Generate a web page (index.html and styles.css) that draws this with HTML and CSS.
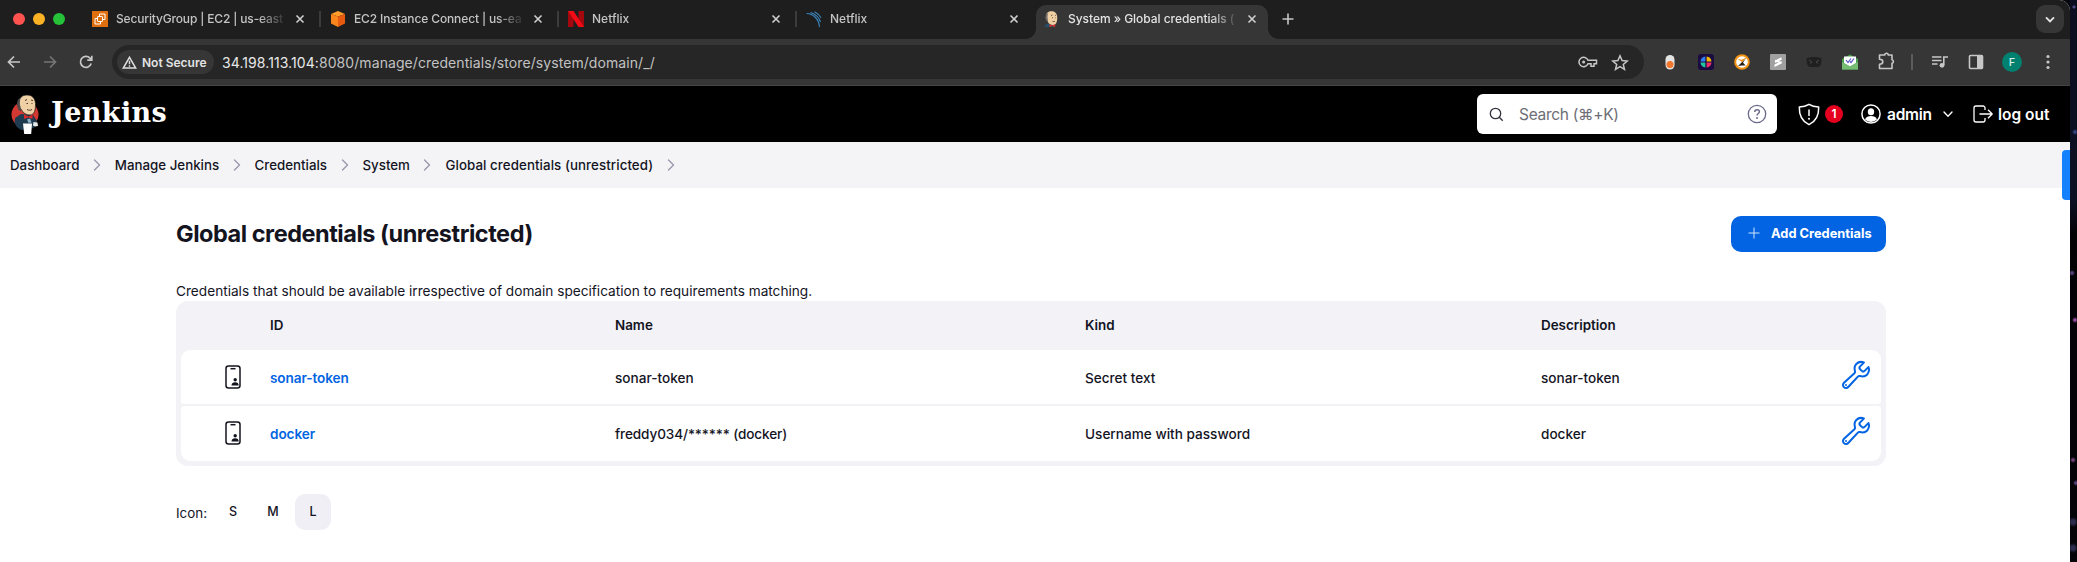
FILE: index.html
```html
<!DOCTYPE html>
<html lang="en">
<head>
<meta charset="utf-8">
<title>System » Global credentials (unrestricted) [Jenkins]</title>
<link rel="stylesheet" href="styles.css">
</head>
<body>
<svg width="0" height="0" class="defs">
  <symbol id="close" viewBox="0 0 10 10"><path d="M1.5 1.5l7 7M8.5 1.5l-7 7" fill="none" stroke="currentColor" stroke-width="1.6"/></symbol>
  <symbol id="chev" viewBox="0 0 8 12"><path d="M1.5 1l5 5-5 5" fill="none" stroke="#9a99ae" stroke-width="1.4" stroke-linecap="round" stroke-linejoin="round"/></symbol>
  <symbol id="cred" viewBox="0 0 16 24"><rect x="1" y="1" width="14" height="22" rx="2.5" fill="none" stroke="#14141f" stroke-width="1.5"/><path d="M5.5 3.7h5" stroke="#14141f" stroke-width="1.5"/><circle cx="10.2" cy="14.8" r="1.7" fill="#14141f"/><path d="M6.5 20.6c0-2.300 1.600-3.300 3.700-3.300s3.500 1 3.500 3.300z" fill="#14141f"/></symbol>
  <symbol id="wrench" viewBox="0 0 512 512"><path d="M393.870 190a32.100 32.100 0 01-45.250 0l-26.570-26.570a32.090 32.090 0 010-45.260L382.190 58a1 1 0 00-.3-1.640c-38.820-16.640-89.150-8.160-121.110 23.570-30.580 30.350-32.320 76-21.120 115.840a31.930 31.930 0 01-9.060 32.080L64 380a48.170 48.170 0 1068 68l153.860-167a31.930 31.930 0 0131.600-9.130c39.540 10.590 84.540 8.600 114.720-21.190 32.490-32 39.500-88.560 23.750-120.930a1 1 0 00-1.600-.26z" fill="none" stroke="currentColor" stroke-width="32" stroke-linecap="round"/><circle cx="96" cy="416" r="16" fill="currentColor"/></symbol>
  <symbol id="butler" viewBox="0 0 30 40">
    <ellipse cx="14" cy="20.500" rx="13.500" ry="13" fill="#d33833"/>
    <path d="M4 24l6-4 12 1 4 6-2 6-4 2-10 1-4-3c-2-2-3-5-2-8z" fill="#1f3b50"/>
    <path d="M8 9c0-5 3-8 8-8s8 3 8.500 8.500c.2 6-1 11.500-5.500 11.500-4 0-7-2-9-6-2-1-3-3-2-6z" fill="#efcfa4" stroke="#1b1b1b" stroke-width=".7"/>
    <path d="M7.500 5c-2 3-2 7 0 11l2.500 1.500-.5-5C8.500 11 8.500 8 9.500 4z" fill="#4f4b4a"/>
    <path d="M14 6.500l2-1M20 6l2 .5M15.500 9.500h1.500M20.500 9.500h1M16 15.500c2 1 3.500 1 5 0" fill="none" stroke="#3b2a20" stroke-width=".9"/>
    <path d="M13 20.500l4.500 2 4-2v4.500l-4-1.500-4.500 1.500z" fill="#d9292a"/>
    <path d="M16 25.500l3-1 1.500 4-3 .5z" fill="#8fb2c8"/>
    <path d="M12 29.500h9l-.8 10.500h-7z" fill="#fff"/><path d="M22.500 28l4 .5.500 3.500-3 .500-2-1z" fill="#e8e8e8"/>
  </symbol>
</svg>
<div class="screen">
  <div class="window">
    <div class="tabs">
      <div class="lights"><i class="red"></i><i class="yellow"></i><i class="green"></i></div>
      <div class="tab">
        <svg class="fav" viewBox="0 0 16 16"><rect width="16" height="16" fill="#e0700f"/><g fill="none" stroke="#fff" stroke-width="1"><rect x="5.500" y="5.500" width="5" height="5" rx=".6"/><path d="M7.500 5.500v-2.500h5.500v5.500h-2.500M5.500 7.500H3v5.500h5.500v-2.500"/></g></svg>
        <span class="title t1">SecurityGroup | EC2 | us-east</span><svg class="x"><use href="#close"/></svg>
      </div>
      <div class="tab sep">
        <svg class="fav" viewBox="0 0 16 16"><path d="M8 0l7 3-7 2.500L1 3z" fill="#ff9c2a"/><path d="M1 3l7 2.500V16l-7-3.500z" fill="#f9861d"/><path d="M15 3L8 5.500V16l7-3.500z" fill="#e85a10"/></svg>
        <span class="title t2">EC2 Instance Connect | us-ea</span><svg class="x"><use href="#close"/></svg>
      </div>
      <div class="tab sep">
        <svg class="fav" viewBox="0 0 16 16"><path d="M0 0h5.500v16H0zM10.500 0H16v16h-5.500z" fill="#a5070f"/><path d="M0 0h5.500L16 16h-5.500z" fill="#f20c16"/></svg>
        <span class="title">Netflix</span><svg class="x"><use href="#close"/></svg>
      </div>
      <div class="tab sep">
        <svg class="fav" viewBox="0 0 16 16" fill="none" stroke="#3b86bd" stroke-width="1.100"><path d="M.5 2.500C7 2.500 13 8 13.500 16M4.500 1.500C9 3 13 6.500 14.500 11M8.500.7c3 1.500 5 3.300 6.500 6"/></svg>
        <span class="title">Netflix</span><svg class="x"><use href="#close"/></svg>
      </div>
      <div class="tab active">
        <svg class="fav" viewBox="0 0 16 16"><path d="M.5 16c.3-2 1.500-3 4-3.500l5 .5 2 3z" fill="#25506a"/><path d="M2 5.500C2 2 4.500.3 7.500.3S13 2 13.200 6c.2 4.500-1 8-4 8S4.500 12.500 3.200 9.500C2 9 1.500 7.500 2 5.500z" fill="#efcfa4"/><path d="M3 2.500c-2 2-2 5-.3 7.500l1.300.5-.3-3c-.5-1.200-.3-3.500.6-5z" fill="#6f6a68"/><path d="M7 4.500l1.500-.5M11 4.200l1 .3M8 6.800h1M11 6.800h.7M8.500 10.500h2.500" stroke="#5b4636" stroke-width=".8"/><path d="M5.500 13.300l3 1.200 2.800-1.200V16l-2.800-.8-3 .8z" fill="#d9292a"/></svg>
        <span class="title t5">System » Global credentials (</span><svg class="x"><use href="#close"/></svg>
      </div>
      <svg class="plus" viewBox="0 0 12 12"><path d="M6 .5v11M.5 6h11" stroke="#c7c7c7" stroke-width="1.600"/></svg>
      <div class="drop"><svg width="10" height="7" viewBox="0 0 10 7"><path d="M1 1.300l4 4 4-4" fill="none" stroke="#e3e3e3" stroke-width="1.900"/></svg></div>
    </div>

    <div class="toolbar">
      <div class="nav">
        <svg width="14" height="14" viewBox="0 0 14 14"><path d="M13 7H2M7 1.500L1.500 7 7 12.500" fill="none" stroke="#c7c7c7" stroke-width="1.700"/></svg>
        <svg width="14" height="14" viewBox="0 0 14 14"><path d="M1 7h11M7 1.500L12.500 7 7 12.500" fill="none" stroke="#757575" stroke-width="1.700"/></svg>
        <svg width="14" height="14" viewBox="0 0 14 14"><path d="M12.200 8.500A5.500 5.500 0 1 1 11 3.100l1.500 1.600M12.800.7v4.500H8.300" fill="none" stroke="#c7c7c7" stroke-width="1.700"/></svg>
      </div>
      <div class="omni">
        <div class="chip"><svg width="15" height="13" viewBox="0 0 15 13"><path d="M7.500 1.300L13.700 12H1.300z" fill="none" stroke="#dedede" stroke-width="1.500"/><path d="M7.500 4.800v3.400M7.500 9.200v1.500" stroke="#dedede" stroke-width="1.400"/></svg><span>Not Secure</span></div>
        <span class="url"><b>34.198.113.104:</b>8080/manage/credentials/store/system/domain/_/</span>
        <svg class="key" width="20" height="12" viewBox="0 0 20 12"><path d="M10 4.200A4.700 4.700 0 1 0 10 7.800h3v2.500h3V7.800h2.500V4.200z" fill="none" stroke="#c7c7c7" stroke-width="1.500"/><circle cx="5.600" cy="6" r="1.500" fill="#c7c7c7"/></svg>
        <svg width="18" height="17" viewBox="0 0 18 17"><path d="M9 1.800l2.100 4.700 5.100.5-3.900 3.400 1.200 5L9 12.700l-4.500 2.700 1.200-5L1.800 7l5.100-.5z" fill="none" stroke="#c7c7c7" stroke-width="1.500"/></svg>
      </div>
      <div class="exts">
        <svg viewBox="0 0 16 16"><rect x="3.500" y="1" width="9" height="14.500" rx="4.500" fill="#e4e4e4"/><circle cx="8" cy="10.500" r="3.500" fill="#f2762b"/></svg>
        <svg viewBox="0 0 16 16"><rect width="16" height="16" rx="3" fill="#1a0b40"/><path d="M7.400 2.500v4.900H2.500a5.500 5.500 0 0 1 4.900-4.900z" fill="#2f80f2"/><path d="M8.600 2.500a5.500 5.500 0 0 1 4.900 4.900H8.600z" fill="#f5b800"/><path d="M2.500 8.600h4.900v4.900a5.500 5.500 0 0 1-4.900-4.900z" fill="#20c5a0"/><path d="M8.600 8.600h4.900a5.500 5.500 0 0 1-4.900 4.900z" fill="#f32d68"/></svg>
        <svg viewBox="0 0 16 16"><circle cx="8" cy="8" r="7.800" fill="#f39314"/><circle cx="8" cy="8" r="5.800" fill="#fff"/><path d="M12.500 3.500L9 8.500l2.500 3H8L4 12z" fill="#2d2115"/><path d="M3.500 5l4 .8L12.500 3.500 8 8z" fill="#f39314"/></svg>
        <svg viewBox="0 0 16 16"><rect width="16" height="16" rx="1" fill="#a0a0a0"/><path d="M11.500 3.200v2.600L5 9V6.500zM11.500 7v2.600L4.500 13v-2.600z" fill="#fff"/><path d="M5 6.500l6.500 2.500" stroke="#fff" stroke-width="1.500"/></svg>
        <svg viewBox="0 0 16 16"><path d="M.5 4.500c3-2 12-2 15 0 0 5-1 8.500-4 8.500h-7C1.500 13 .5 9.500.5 4.500z" fill="#202020"/><path d="M3 6l3 2-2 1.500M13 6l-3 2 2 1.500" fill="none" stroke="#474747"/></svg>
        <svg viewBox="0 0 16 16"><path d="M0 5l8-4.500L16 5v10.500H0z" fill="#4a9f4e"/><path d="M2 2.500h12V9l-6 3.500L2 9z" fill="#fff"/><path d="M0 8l8 4.500L16 8v7.500H0z" fill="#75bd72"/><path d="M4 6l2 2.500 3-4M8 7.500l1 1 3-4" fill="none" stroke="#5a55c8" stroke-width="1.200"/></svg>
        <svg class="puzzle" viewBox="0 0 18 18"><path d="M1.500 3h5.300a1.700 1.700 0 0 1 3.400 0H14v4.800a1.800 1.800 0 0 1 0 3.500v5.200H1.500v-4.300c2.300 0 3.300-1 3.300-2.500s-1-2.500-3.300-2.500z" fill="none" stroke="#c7c7c7" stroke-width="1.600" stroke-linejoin="round"/></svg>
      </div>
      <i class="bar"></i>
      <div class="tools">
        <svg width="16" height="16" viewBox="0 0 16 16"><path d="M0 3h9.500M0 6.500h9.500M0 10h5.500M11.800 11V3H16" fill="none" stroke="#c7c7c7" stroke-width="1.600"/><circle cx="10" cy="11.300" r="2.400" fill="#c7c7c7"/></svg>
        <svg width="16" height="16" viewBox="0 0 16 16"><rect x="1.500" y="1.500" width="13" height="13" rx="1" fill="none" stroke="#c7c7c7" stroke-width="1.600"/><path d="M9 1.500h5.500v13H9z" fill="#c7c7c7"/></svg>
        <span class="avatar">F</span>
        <svg width="16" height="16" viewBox="0 0 16 16" fill="#c7c7c7"><circle cx="8" cy="2.500" r="1.600"/><circle cx="8" cy="8" r="1.600"/><circle cx="8" cy="13.500" r="1.600"/></svg>
      </div>
    </div>

    <header class="header">
      <svg class="logo"><use href="#butler"/></svg>
      <span class="brand">Jenkins</span>
      <div class="search">
        <svg width="15" height="15" viewBox="0 0 15 15"><circle cx="6.500" cy="6.500" r="5.200" fill="none" stroke="#33333f" stroke-width="1.300"/><path d="M10.300 10.300l3.400 3.400" stroke="#33333f" stroke-width="1.400"/></svg>
        <span>Search (⌘+K)</span>
        <svg width="20" height="20" viewBox="0 0 20 20"><circle cx="10" cy="10" r="8.700" fill="none" stroke="#6c6a8b" stroke-width="1.300"/><path d="M7.700 8c0-1.500 1-2.300 2.400-2.300s2.300.9 2.300 2.100c0 1.700-2.400 1.900-2.400 3.800" fill="none" stroke="#6c6a8b" stroke-width="1.400"/><circle cx="10" cy="14" r="1" fill="#6c6a8b"/></svg>
      </div>
      <svg class="shield" width="24" height="23" viewBox="0 0 24 23"><path d="M12 1.300c3 1.900 6.300 2.500 9.700 2.600.3 9-3 14.500-9.700 17.800C5.300 18.400 2 12.900 2.300 3.900c3.400-.1 6.700-.7 9.700-2.600z" fill="none" stroke="#fff" stroke-width="1.500" stroke-linejoin="round"/><path d="M12 6.500v6.500" stroke="#fff" stroke-width="1.500"/><circle cx="12" cy="15.700" r="1" fill="#fff"/></svg>
      <span class="badge">1</span>
      <svg class="user" width="20" height="20" viewBox="0 0 20 20"><circle cx="10" cy="10" r="9.100" fill="none" stroke="#fff" stroke-width="1.500"/><ellipse cx="10" cy="7.700" rx="3.200" ry="3.500" fill="#fff"/><path d="M4 15.500c1-2.600 3.200-3.500 6-3.500s5 .9 6 3.500A8.500 8.500 0 0 1 4 15.500z" fill="#fff"/></svg>
      <span class="admin">admin</span>
      <svg class="down" width="10" height="7" viewBox="0 0 10 7"><path d="M1 1l4 4.300L9 1" fill="none" stroke="#fff" stroke-width="1.400" stroke-linecap="round"/></svg>
      <svg class="exit" width="20" height="18" viewBox="0 0 20 18"><path d="M12 5V3a2 2 0 0 0-2-2H3a2 2 0 0 0-2 2v12a2 2 0 0 0 2 2h7a2 2 0 0 0 2-2v-2M6.500 9H19M15 4.800L19.200 9 15 13.200" fill="none" stroke="#fff" stroke-width="1.300" stroke-linejoin="round"/></svg>
      <span class="logout">log out</span>
    </header>

    <nav class="crumbs">
      <span>Dashboard</span><svg><use href="#chev"/></svg>
      <span>Manage Jenkins</span><svg><use href="#chev"/></svg>
      <span>Credentials</span><svg><use href="#chev"/></svg>
      <span>System</span><svg><use href="#chev"/></svg>
      <span class="wide">Global credentials (unrestricted)</span><svg><use href="#chev"/></svg>
    </nav>

    <main class="main">
      <div class="top">
        <h1>Global credentials (unrestricted)</h1>
        <a class="add"><svg width="12" height="12" viewBox="0 0 12 12"><path d="M6 .5v11M.5 6h11" stroke="#d4e5fb" stroke-width="1"/></svg>Add Credentials</a>
      </div>
      <p class="desc">Credentials that should be available irrespective of domain specification to requirements matching.</p>
      <div class="table">
        <div class="row head"><span></span><span>ID</span><span>Name</span><span>Kind</span><span>Description</span><span></span></div>
        <div class="row body first"><svg class="cred"><use href="#cred"/></svg><a>sonar-token</a><span>sonar-token</span><span>Secret text</span><span>sonar-token</span><svg class="wrench"><use href="#wrench"/></svg></div>
        <div class="row body last"><svg class="cred"><use href="#cred"/></svg><a>docker</a><span class="tight">freddy034/****** (docker)</span><span>Username with password</span><span>docker</span><svg class="wrench"><use href="#wrench"/></svg></div>
      </div>
      <div class="sizes"><span class="label">Icon:</span><span class="size">S</span><span class="size">M</span><span class="size on">L</span></div>
    </main>
    <i class="handle"></i>
  </div>
  <div class="desktop"></div>
</div>
</body>
</html>
```
FILE: styles.css
```css
* { box-sizing: border-box; }
body { margin: 0; font-family: Inter, "Noto Sans", sans-serif; color: #14141f; overflow: hidden; }
svg { flex: none; display: block; }
.defs { position: absolute; }
.screen { display: flex; width: 2077px; height: 562px; background: #05060d; }
.window { position: relative; width: 2070px; height: 562px; background: #fff; border-top-right-radius: 11px; overflow: hidden; display: flex; flex-direction: column; }
.desktop {
  flex: 1;
  background:
    radial-gradient(circle at 4px 7px, #4a4a86 0 1px, transparent 2px),
    radial-gradient(circle at 5px 132px, #33437c 0 1px, transparent 3px),
    radial-gradient(circle at 2px 273px, #54407c 0 1px, transparent 3px),
    radial-gradient(circle at 5px 320px, #8d4a96 0 1px, transparent 3px),
    radial-gradient(circle at 3px 460px, #6d3f74 0 1px, transparent 3px),
    radial-gradient(circle at 6px 483px, #55407c 0 1px, transparent 3px),
    radial-gradient(circle at 3px 522px, #2b2b4c 0 2px, transparent 5px),
    radial-gradient(circle at 3px 548px, #2b2b4c 0 2px, transparent 5px),
    linear-gradient(#0a0d20, #0b1022 200px, #020205 235px, #040308);
}

.tabs { display: flex; height: 39px; background: #1e1e1e; flex: none; }
.lights { display: flex; gap: 8px; width: 82px; padding: 13px 0 0 13px; }
.lights i { width: 12px; height: 12px; border-radius: 50%; }
.red { background: #ff5350; }
.yellow { background: #fdb225; }
.green { background: #25c138; }
.tab { position: relative; display: flex; align-items: center; width: 238px; height: 38px; padding: 0 15px 0 10px; color: #c4c4c4; }
.sep::before { content: ""; position: absolute; left: -1px; top: 11px; width: 2px; height: 16px; background: #3c3c3c; }
.fav { width: 16px; height: 16px; margin-right: 8px; }
.title { width: 169px; height: 18px; line-height: 18px; font-size: 12px; font-weight: 500; white-space: nowrap; overflow: hidden; -webkit-mask-image: linear-gradient(90deg, #000 143px, transparent 171px); mask-image: linear-gradient(90deg, #000 143px, transparent 171px); }
.t1 { letter-spacing: -.16px; }
.t2 { letter-spacing: -.13px; }
.t5 { letter-spacing: -.04px; }
.x { width: 10px; height: 10px; margin-left: auto; color: #cfcfcf; }
.active { color: #e3e3e3; z-index: 0; }
.active::before { content: ""; position: absolute; z-index: -1; left: 2px; right: 4px; top: 5px; height: 34px; background: #363636; border-radius: 10px 10px 0 0; }
.active::after { content: ""; position: absolute; z-index: -1; left: -8px; right: -6px; top: 29px; height: 10px; background: radial-gradient(circle at 0 0, transparent 9.500px, #363636 10px) 0 0 / 10px 10px no-repeat, radial-gradient(circle at 10px 0, transparent 9.500px, #363636 10px) 100% 0 / 10px 10px no-repeat; }
.plus { width: 12px; height: 12px; margin: 13px 0 0 10px; }
.drop { display: flex; align-items: center; justify-content: center; width: 28px; height: 28px; margin: 5px 6px 0 auto; border-radius: 9px; background: #363636; }

.toolbar { display: flex; align-items: center; height: 47px; flex: none; background: #363636; border-bottom: 1px solid #454545; padding-left: 7px; }
.nav { display: flex; gap: 22px; width: 105px; }
.omni { display: flex; align-items: center; width: 1532px; height: 34px; padding: 0 15px 0 5px; border-radius: 17px; background: #262626; }
.chip { display: flex; align-items: center; gap: 5px; width: 97px; height: 24px; padding-left: 5px; border-radius: 12px; background: #363636; color: #e3e3e3; font-size: 12px; font-weight: 600; white-space: nowrap; }
.url { margin-left: 8px; font-size: 14px; letter-spacing: .08px; color: #c2c2c2; }
.url b { font-weight: 400; color: #e8e8e8; }
.key { margin: 0 13px 0 auto; }
.exts { display: flex; gap: 20px; align-items: center; margin-left: 18px; }
.exts svg { width: 16px; height: 16px; }
.exts .puzzle { width: 18px; height: 18px; margin-top: -2px; }
.bar { width: 2px; height: 16px; margin-left: 15px; background: #5c5c5c; }
.tools { display: flex; gap: 18px; align-items: center; margin-left: 19px; }
.tools svg { margin-right: 2px; }
.avatar { width: 20px; height: 20px; margin-left: -2px; border-radius: 50%; background: #00806f; color: #d6efea; font-size: 11px; font-weight: 500; line-height: 20px; text-align: center; }
.tools svg:last-child { margin: 0; }

.header { display: flex; align-items: center; height: 56px; flex: none; background: #000; color: #fff; padding-left: 11px; font-size: 15.500px; font-weight: 600; white-space: nowrap; }
.logo { width: 30px; height: 40px; }
.brand { width: 1425px; padding: 0 0 2px 10px; font: 700 27px/30px "DejaVu Serif", serif; letter-spacing: .4px; }
.search { display: flex; align-items: center; width: 300px; height: 40px; padding: 0 10px 0 12px; margin-left: 11px; border-radius: 6px; background: #fff; color: #6e6e76; font-weight: 400; letter-spacing: -.3px; }
.search span { flex: 1; margin-left: 15px; }
.shield { margin-left: 20px; }
.badge { width: 18px; height: 18px; margin-left: 4px; border-radius: 50%; background: #e6001f; font-size: 12px; line-height: 18px; text-align: center; }
.user { margin-left: 18px; }
.admin { width: 45px; margin-left: 6px; letter-spacing: -.25px; }
.down { margin-left: 11px; }
.exit { margin-left: 20px; }
.logout { margin-left: 5px; }

.crumbs { display: flex; align-items: center; height: 46px; flex: none; padding-left: 10px; background: #f4f4f7; font-size: 13.300px; font-weight: 500; }
.crumbs svg { width: 8px; height: 12px; margin: 0 14px 0 13.500px; }
.wide { letter-spacing: .08px; }

.main { padding: 28px 184px 0 176px; }
.top { display: flex; justify-content: space-between; height: 36px; }
h1 { margin: 0; font-size: 23.500px; line-height: 36px; font-weight: 700; letter-spacing: -.47px; }
.add { display: flex; align-items: center; gap: 11px; width: 155px; height: 36px; padding: 0 0 2px 17px; border-radius: 10px; background: #0264e2; color: #fff; font-size: 12.850px; font-weight: 700; white-space: nowrap; }
.desc { margin: 29px 0 0; height: 20px; line-height: 21px; font-size: 13.650px; }
.table { height: 165px; padding: 0 5px 5px; border-radius: 12px; background: #f2f2f7; }
.row { display: grid; grid-template-columns: 89px 345px 470px 456px 301px 39px; align-items: center; }
.head { height: 49px; padding-bottom: 2px; font-size: 13.400px; font-weight: 600; }
.body { background: #fff; height: 54px; font-size: 13.600px; font-weight: 500; padding-top: 2px; }
.first { border-radius: 9px 9px 3px 3px; margin-bottom: 2px; }
.last { border-radius: 3px 3px 9px 9px; height: 55px; padding-top: 0; }
.body a { color: #0264e2; font-weight: 600; letter-spacing: -.1px; }
.tight { letter-spacing: -.12px; }
.cred { width: 16px; height: 24px; margin: -3px 0 0 44px; }
.last .cred { margin-top: -1px; }
.wrench { width: 32px; height: 32px; margin: -6px 0 0 -2px; color: #0264e2; }
.sizes { display: flex; margin-top: 28px; height: 36px; font-size: 12.500px; font-weight: 500; }
.label { width: 39px; font-size: 13.400px; font-weight: 400; line-height: 38px; }
.size { width: 36px; height: 36px; margin-right: 4px; border-radius: 10px; line-height: 35px; text-align: center; }
.on { background: #efeff5; }
.handle { position: absolute; right: 0; top: 150px; width: 8px; height: 50px; border-radius: 4px 0 0 4px; background: #1482ff; }
```
